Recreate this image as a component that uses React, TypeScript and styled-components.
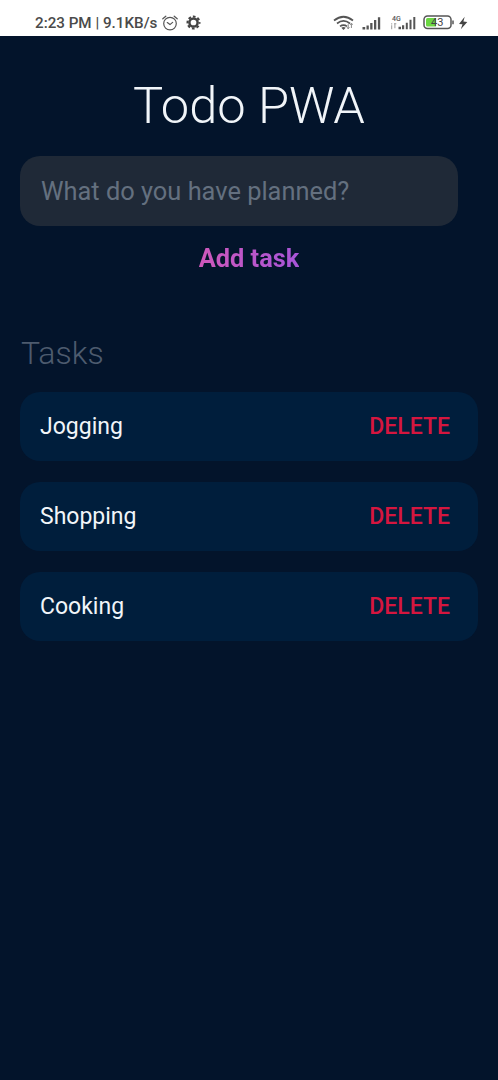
import React, { useState } from 'react';
import styled, { createGlobalStyle } from 'styled-components';

const GlobalStyle = createGlobalStyle`
  * { box-sizing: border-box; }
  body {
    margin: 0;
    background: #03142b;
    font-family: Roboto, "Liberation Sans", sans-serif;
  }
`;

const Screen = styled.div`
  display: flex;
  flex-direction: column;
  min-height: 1080px;
  background: #03142b;
`;

const StatusBar = styled.header`
  display: flex;
  align-items: center;
  justify-content: space-between;
  height: 36px;
  padding: 9px 30px 0 35px;
  background: #fff;
  color: #4a4a4a;
`;

const StatusGroup = styled.div`
  display: flex;
  align-items: center;
`;

const Clock = styled.span`
  width: 127px;
  font-size: 15.2px;
  font-weight: 500;
  line-height: 18px;
  white-space: nowrap;
`;

const Glyph = styled.svg<{ $gap?: number }>`
  display: block;
  flex: none;
  margin-left: ${({ $gap = 0 }) => $gap}px;
`;

const Main = styled.main`
  display: flex;
  flex-direction: column;
  padding: 39px 20px 0;
`;

const Title = styled.h1`
  margin: 0;
  color: #f1f5f9;
  font-size: 50.6px;
  font-weight: 300;
  line-height: 61px;
  text-align: center;
`;

const TaskForm = styled.form`
  display: flex;
  flex-direction: column;
  margin-top: 20px;
`;

const TaskInput = styled.input`
  width: 438px;
  height: 70px;
  padding: 0 21px;
  border: 0;
  border-radius: 20px;
  outline: 0;
  background: #1f2937;
  color: #f1f5f9;
  font: 400 25.4px/30px Roboto, "Liberation Sans", sans-serif;
  &::placeholder { color: #64707f; opacity: 1; }
`;

const AddButton = styled.button`
  align-self: center;
  margin-top: 16px;
  padding: 0;
  border: 0;
  background: linear-gradient(to right, #cf58bb, #a855d8);
  background-clip: text;
  color: transparent;
  font: 700 25.4px/32px Roboto, "Liberation Sans", sans-serif;
`;

const Heading = styled.h2`
  margin: 60px 0 20px 1px;
  color: #4d5b6e;
  font-size: 32px;
  font-weight: 300;
  line-height: 38px;
`;

const TaskList = styled.ul`
  display: flex;
  flex-direction: column;
  gap: 21px;
  margin: 0;
  padding: 0;
  list-style: none;
`;

const TaskRow = styled.li`
  display: flex;
  align-items: center;
  justify-content: space-between;
  height: 69px;
  padding: 0 28px 0 20px;
  border-radius: 20px;
  background: #001e3c;
`;

const TaskName = styled.span`
  color: #f1f5f9;
  font-size: 23px;
  line-height: 28px;
`;

const DeleteButton = styled.button`
  padding: 0;
  border: 0;
  background: none;
  color: #d5163f;
  font: 500 23px/28px Roboto, "Liberation Sans", sans-serif;
`;

const AlarmIcon = () => (
  <Glyph width="16" height="16" viewBox="0 0 16 16" fill="none" stroke="#555" strokeWidth="1.2" strokeLinecap="round">
    <circle cx="8" cy="8.6" r="6.3" />
    <path d="M.8 3.8 3.8 1.2M15.2 3.8 12.2 1.2M5.3 7.6 8 9.6 10.6 7.4" />
  </Glyph>
);

const GearIcon = () => (
  <Glyph $gap={8} width="15" height="15" viewBox="0 0 15 15" fill="none" stroke="#444">
    <circle cx="7.5" cy="7.5" r="4.1" strokeWidth="2.5" />
    <circle cx="7.5" cy="7.5" r="6" strokeWidth="2" strokeDasharray="2.7 2.012" strokeDashoffset="1.35" />
  </Glyph>
);

const WifiIcon = () => (
  <Glyph width="22" height="16" viewBox="0 0 22 16" fill="none" stroke="#555" strokeWidth="1.7">
    <path d="M1 5.5Q10.5-2 20 5.5M4 8.5Q10.5 3.4 17 8.5M7 11.4Q10.5 8.8 14 11.4" />
    <path d="M8.3 12.7Q10.5 11.4 12.7 12.7L10.5 15Z" fill="#555" stroke="none" />
    <path d="M15.2 13.7V9.2M18.4 8.5V13" strokeWidth="1" stroke="#888" />
    <path d="m14 12 1.2 2 1.3-2M17.2 10l1.2-2 1.3 2" strokeWidth=".8" stroke="#888" />
  </Glyph>
);

const SignalIcon = () => (
  <Glyph $gap={7} width="19" height="16" viewBox="0 0 19 16" fill="#555">
    <path d="M.5 12h2.7v2.5H.5zM4.5 10.4h2.3v4.1H4.5zM8.2 8h2.3v6.5H8.2zM12 5h2.3v9.5H12zM15.9 2.3h2.3v12.2h-2.3z" />
  </Glyph>
);

const MobileDataIcon = () => (
  <Glyph $gap={9} width="27" height="18" viewBox="0 0 27 18" fill="#555">
    <text x="2" y="6.8" fontSize="7" fontWeight="500" fontFamily="Roboto, sans-serif">4G</text>
    <path d="M1.2 9.2h1v1.2h-1zM1.2 11.3h1v4h-1zM4 9.2h2.3v1H5.4v4h-1v-4H4z" fill="#999" />
    <path d="M8.5 12.8h2.5v2.5H8.5zM12 11.2h2.2v4.1H12zM15.8 8.8h2v6.5h-2zM19.5 5.8h2v9.5h-2zM23.3 3.1h2v12.2h-2z" />
  </Glyph>
);

const BatteryIcon = () => (
  <Glyph $gap={6} width="32" height="15" viewBox="0 0 32 15" fill="none">
    <rect x="1" y="1" width="27" height="12.5" rx="3.5" stroke="#555" strokeWidth="1.5" />
    <path d="M4.5 3H13v8.5H4.5Q3 11.5 3 10V4.5Q3 3 4.5 3Z" fill="#6bd741" />
    <path d="M30 5.5v3.7" stroke="#555" strokeWidth="1.5" />
    <text x="8" y="11.4" fill="#444" fontSize="11" fontFamily="Roboto, sans-serif">43</text>
  </Glyph>
);

const ChargeIcon = () => (
  <Glyph $gap={3} width="10" height="14" viewBox="0 0 10 14" fill="#444">
    <path d="M6.7.8 1 7.9 4.5 8.3 2.8 13.2 9.3 5.9 5.4 5.5Z" />
  </Glyph>
);

export default function App() {
  const [tasks, setTasks] = useState(['Jogging', 'Shopping', 'Cooking']);
  const [draft, setDraft] = useState('');

  const addTask = (event: React.FormEvent) => {
    event.preventDefault();
    const name = draft.trim();
    if (!name) return;
    setTasks([...tasks, name]);
    setDraft('');
  };

  return (
    <Screen>
      <GlobalStyle />
      <StatusBar>
        <StatusGroup>
          <Clock>2:23 PM | 9.1KB/s</Clock>
          <AlarmIcon />
          <GearIcon />
        </StatusGroup>
        <StatusGroup>
          <WifiIcon />
          <SignalIcon />
          <MobileDataIcon />
          <BatteryIcon />
          <ChargeIcon />
        </StatusGroup>
      </StatusBar>
      <Main>
        <Title>Todo PWA</Title>
        <TaskForm onSubmit={addTask}>
          <TaskInput
            placeholder="What do you have planned?"
            value={draft}
            onChange={(event) => setDraft(event.target.value)}
          />
          <AddButton type="submit">Add task</AddButton>
        </TaskForm>
        <Heading>Tasks</Heading>
        <TaskList>
          {tasks.map((task, index) => (
            <TaskRow key={index}>
              <TaskName>{task}</TaskName>
              <DeleteButton onClick={() => setTasks(tasks.filter((_, i) => i !== index))}>DELETE</DeleteButton>
            </TaskRow>
          ))}
        </TaskList>
      </Main>
    </Screen>
  );
}
